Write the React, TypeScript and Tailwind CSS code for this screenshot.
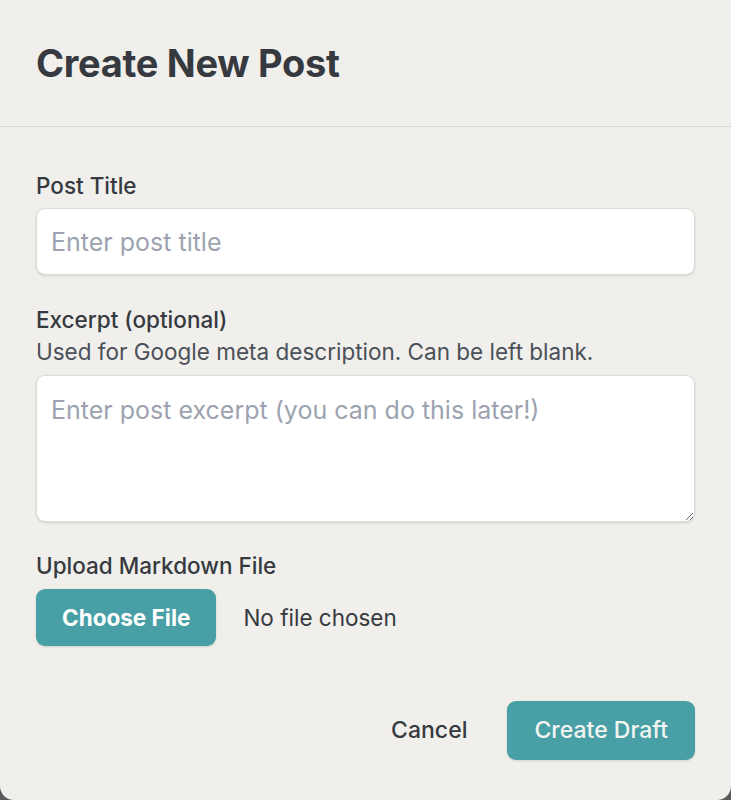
import { useState } from 'react'

const App = () => {
  const [fileName, setFileName] = useState('')

  return (
    <div className="min-h-[800px] bg-[#5b5b5b]" style={{ fontFamily: 'Inter, "Noto Sans", sans-serif' }}>
      <div className="flex h-[800px] flex-col overflow-hidden rounded-b-[14px] bg-[#f0efeb] text-[#363a40]">
        {/* Header */}
        <div className="border-b border-[#d7d6d1] px-[36px] py-[40px]">
          <h2 className="text-[38px] font-bold leading-[46px] tracking-[-0.3px]">Create New Post</h2>
        </div>

        {/* Form */}
        <div className="flex flex-col px-[36px] pt-[43px]">
          <label className="mb-[7px] text-[22.5px] font-medium leading-[31px]">Post Title</label>
          <input
            type="text"
            placeholder="Enter post title"
            className="h-[67px] w-full rounded-[9px] border border-[#dcdbd6] bg-white px-[14px] text-[25px] shadow-sm outline-none placeholder:text-[#9ca3af]"
          />

          <label className="mt-[29px] text-[22.5px] font-medium leading-[31px]">Excerpt (optional)</label>
          <p className="mt-[1px] text-[22.5px] leading-[31px] text-[#4b5058]">Used for Google meta description. Can be left blank.</p>
          <textarea
            placeholder="Enter post excerpt (you can do this later!)"
            className="mt-[8px] h-[147px] w-full rounded-[9px] border border-[#dcdbd6] bg-white px-[14px] py-[16px] text-[25px] leading-[36px] shadow-sm outline-none placeholder:text-[#9ca3af]"
          />

          <label className="mt-[28px] text-[22.5px] font-medium leading-[31px]">Upload Markdown File</label>
          <div className="mt-[8px] flex items-center gap-[27px]">
            <label className="flex h-[57px] cursor-pointer items-center rounded-[9px] bg-[#48a0a6] px-[26px] text-[22.5px] font-bold text-white shadow-sm">
              Choose File
              <input
                type="file"
                accept=".md"
                className="hidden"
                onChange={(e) => setFileName(e.target.files?.[0]?.name ?? '')}
              />
            </label>
            <span className="text-[22.5px]">{fileName || 'No file chosen'}</span>
          </div>
        </div>

        {/* Footer */}
        <div className="mt-auto flex items-center justify-end gap-[16px] px-[36px] pb-[40px]">
          <button className="px-[24px] py-[12px] text-[23px] font-medium">Cancel</button>
          <button className="h-[59px] rounded-[9px] bg-[#48a0a6] px-[27px] text-[23px] font-medium text-[#f4f4f2] shadow-sm">
            Create Draft
          </button>
        </div>
      </div>
    </div>
  )
}

export default App
